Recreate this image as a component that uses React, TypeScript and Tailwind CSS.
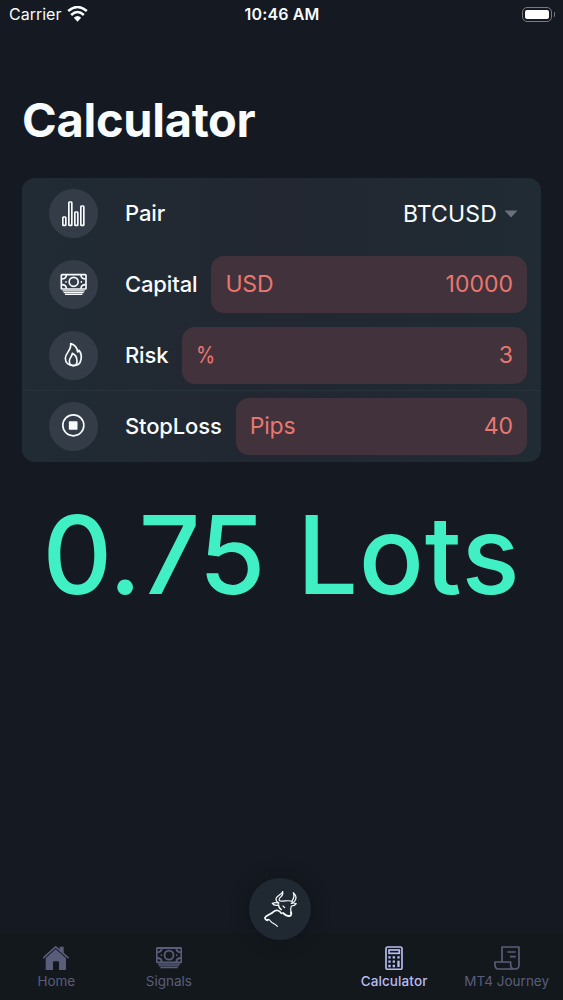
import type { ReactNode } from "react";

type Row = {
  label: string;
  icon: ReactNode;
  unit?: string;
  value: string;
};

type Tab = {
  name: string;
  icon: ReactNode;
  active?: boolean;
};

function ChartIcon() {
  return (
    <svg viewBox="0 0 147 147" className="size-full" fill="none" stroke="currentColor" strokeWidth="5">
      <rect x="41.500" y="84" width="9" height="25" rx="2" />
      <rect x="59.500" y="39" width="9" height="70" rx="2" />
      <rect x="77.500" y="69" width="9" height="40" rx="2" />
      <rect x="95.500" y="51" width="9" height="58" rx="2" />
    </svg>
  );
}

function Banknotes() {
  return (
    <>
      <rect x="2" y="2" width="74" height="43" rx="2" />
      <circle cx="39" cy="23.500" r="13.500" />
      <path d="M17 3C17 11 11 15 3 15M61 3C61 11 67 15 75 15M17 44C17 36 11 32 3 32M61 44C61 36 67 32 75 32" />
      <path d="M14 23.500h4M60 23.500h4" />
      <path d="M6 50.500h66M9 55.800h60M13 61h52" strokeWidth="3.600" />
    </>
  );
}

function CapitalIcon() {
  return (
    <svg viewBox="-35 -42 147 147" className="size-full" fill="none" stroke="currentColor" strokeWidth="5">
      <Banknotes />
    </svg>
  );
}

function FlameIcon() {
  return (
    <svg viewBox="0 0 147 147" className="size-full" fill="none" stroke="currentColor" strokeWidth="5" strokeLinejoin="round">
      <path d="M65 38C79 42 85 53 86 63C88 62 89 60 90 58C96 65 98 75 96 85C94 98 85 104 73 104C59 104 49 96 49 82C49 65 68 59 65 38Z" />
      <path d="M70 67C79 71 84 81 84 91C84 99 79 104 73 104C65 104 61 99 61 91C61 81 69 77 70 67Z" />
    </svg>
  );
}

function StopIcon() {
  return (
    <svg viewBox="0 0 147 147" className="size-full" fill="none" stroke="currentColor" strokeWidth="5">
      <circle cx="73" cy="70" r="31.500" />
      <rect x="59.500" y="58" width="26" height="25" rx="2" fill="currentColor" stroke="none" />
    </svg>
  );
}

function HomeIcon() {
  return (
    <svg viewBox="0 0 78 72" className="h-6 w-[26px]" fill="currentColor">
      <path d="M8 36L38 9L69 36V70Q69 72 67 72H48V49Q48 46 45 46H33Q30 46 30 49V72H10Q8 72 8 70Z" />
      <path d="M2 35L36 4Q38 2 40 4L75 35" fill="none" stroke="#13181d" strokeWidth="9" />
      <path d="M2 35L36 4Q38 2 40 4L75 35" fill="none" stroke="currentColor" strokeWidth="5" strokeLinecap="round" />
      <path d="M50 2h12v20l-12-11Z" />
    </svg>
  );
}

function SignalsIcon() {
  return (
    <svg viewBox="0 -4 78 72" className="h-6 w-[26px]" fill="none" stroke="currentColor" strokeWidth="5.500">
      <Banknotes />
    </svg>
  );
}

function CalculatorIcon() {
  return (
    <svg viewBox="0 0 54 72" className="h-6 w-[18px]" fill="none" stroke="currentColor" strokeWidth="5">
      <rect x="3" y="3" width="48" height="67" rx="5" />
      <rect x="12" y="12" width="31" height="10" />
      <path d="M10 34h7M23 34h7M37 34h7M10 47h7M23 47h7M10 60h7M23 60h7" strokeWidth="7" />
      <path d="M40.500 44v19" strokeWidth="7" />
    </svg>
  );
}

function JourneyIcon() {
  return (
    <svg viewBox="0 0 78 72" className="h-6 w-[26px]" fill="none" stroke="currentColor" strokeWidth="5" strokeLinejoin="round">
      <path d="M24 47V3H75V57Q75 69 64 69H14Q3 69 3 57V48H50V57Q50 69 62 69" />
      <path d="M40 18h25M48 32h17" />
    </svg>
  );
}

function BullIcon() {
  return (
    <svg
      viewBox="42 39 186 186"
      className="size-full"
      fill="none"
      stroke="currentColor"
      strokeWidth="3.500"
      strokeLinecap="round"
      strokeLinejoin="round"
    >
      <path d="M143 80C139 89 126 92 123 101C122 107 126 111 131 114" />
      <path d="M143 80C146 91 139 94 134 99C131 103 132 106 136 108C146 110 160 104 171 109" />
      <path d="M175 83C178 91 177 98 174 103L171 109M175 83C182 90 185 100 180 107C178 111 174 113 169 115" />
      <path d="M131 114C124 112 117 113 112 115C116 121 123 122 131 120C131 128 133 131 139 134" strokeWidth="4" />
      <path d="M169 115C175 113 180 114 184 116C180 122 175 123 169 123C166 130 167 136 168 142" />
      <path d="M168 142C171 151 166 154 160 153C152 152 149 148 144 144" strokeWidth="6" />
      <path d="M144 123l5 5" />
      <path d="M139 145C133 136 123 133 116 140C108 149 94 149 90 158C89 162 93 165 98 166" strokeWidth="5" />
      <path d="M96 164C103 161 104 165 107 169C111 176 121 175 127 184" />
    </svg>
  );
}

function WifiIcon() {
  return (
    <svg viewBox="0 0 62 48" className="h-4 w-[21px]" fill="none" stroke="currentColor" strokeWidth="7.500">
      <path d="M3 15Q31 -9 59 15" />
      <path d="M12 27Q31 9 50 27" />
      <path d="M20 35Q31 25 42 35L31 47Z" fill="currentColor" stroke="none" />
    </svg>
  );
}

const rows: Row[] = [
  { label: "Pair", icon: <ChartIcon />, value: "BTCUSD" },
  { label: "Capital", icon: <CapitalIcon />, unit: "USD", value: "10000" },
  { label: "Risk", icon: <FlameIcon />, unit: "%", value: "3" },
  { label: "StopLoss", icon: <StopIcon />, unit: "Pips", value: "40" },
];

const leftTabs: Tab[] = [
  { name: "Home", icon: <HomeIcon /> },
  { name: "Signals", icon: <SignalsIcon /> },
];

const rightTabs: Tab[] = [
  { name: "Calculator", icon: <CalculatorIcon />, active: true },
  { name: "MT4 Journey", icon: <JourneyIcon /> },
];

function StatusBar() {
  return (
    <header className="grid h-7 grid-cols-[1fr_auto_1fr] items-center pr-2 pl-[9px] text-[16px]">
      <div className="flex items-center gap-[6px]">
        <span>Carrier</span>
        <WifiIcon />
      </div>
      <span className="text-center font-semibold tracking-[0.15px]">10:46 AM</span>
      <div className="flex items-center justify-end gap-[2px]">
        <div className="h-[15px] w-[30px] rounded-[5px] border border-[#777b80] p-[2px]">
          <div className="h-full rounded-[2px] bg-white" />
        </div>
        <div className="h-[5px] w-[1px] rounded-r bg-[#777b80]" />
      </div>
    </header>
  );
}

function SettingRow({ row }: { row: Row }) {
  return (
    <div className="flex h-[71px] items-center pr-[14px] pl-[27px]">
      <div className="size-[49px] shrink-0 rounded-full bg-[#343c47]">{row.icon}</div>
      <span className="mr-[14px] ml-[27px] text-[22px] font-medium tracking-[-0.14px]">{row.label}</span>
      {row.unit ? (
        <div className="flex h-[57px] flex-1 items-center justify-between rounded-[13px] bg-[#42323b] px-[14px] text-[23px] text-[#e87770]">
          <span className={row.unit === "%" ? "origin-left scale-x-85" : "tracking-[-0.2px]"}>{row.unit}</span>
          <span>{row.value}</span>
        </div>
      ) : (
        <div className="flex flex-1 items-center justify-end gap-[7px] pt-px pr-[9px] text-[23px]">
          <span className="tracking-[0.15px]">{row.value}</span>
          <svg viewBox="0 0 14 8" className="h-2 w-[14px] fill-[#69717c]">
            <path d="M0.500 0.500h13L7 7.500Z" />
          </svg>
        </div>
      )}
    </div>
  );
}

function TabButton({ tab }: { tab: Tab }) {
  return (
    <button
      className={`flex flex-col items-center gap-[2px] pt-[13px] text-[13.500px] leading-[18px] whitespace-nowrap ${
        tab.active ? "font-medium tracking-[0.1px] text-[#b7bcf2]" : "text-[#5a5d7a]"
      }`}
    >
      {tab.icon}
      <span>{tab.name}</span>
    </button>
  );
}

export default function App() {
  return (
    <div className="flex h-[1000px] w-[563px] flex-col overflow-hidden bg-[#151921] font-['Inter',sans-serif] text-[#f8fcfe]">
      <StatusBar />
      <main className="flex-1 px-[22px]">
        <h1 className="mt-[64px] text-[47px] leading-[56px] font-bold tracking-[-0.3px]">Calculator</h1>
        <section className="relative mt-[30px] rounded-[13px] bg-linear-to-r from-[#202b33] via-[#222731] to-[#202b33]">
          {rows.map((row) => (
            <SettingRow key={row.label} row={row} />
          ))}
          <div className="absolute top-[212px] h-px w-full bg-[#28323a]" />
        </section>
        <p className="mt-[28px] text-center text-[108px] leading-[130px] font-medium whitespace-nowrap text-[#40f0c4]">
          <span className="tracking-[-0.7px] [word-spacing:4px]">0.75 </span>
          <span className="tracking-[0.8px]">Lots</span>
        </p>
      </main>
      <nav className="relative grid h-[67px] grid-cols-5 items-start bg-[#13181d]">
        {leftTabs.map((tab) => (
          <TabButton key={tab.name} tab={tab} />
        ))}
        <button className="absolute -top-[55px] left-[249px] size-[62px] rounded-full bg-[#202932] shadow-[0_0_14px_4px_#11161b]">
          <BullIcon />
        </button>
        <span />
        {rightTabs.map((tab) => (
          <TabButton key={tab.name} tab={tab} />
        ))}
      </nav>
    </div>
  );
}
